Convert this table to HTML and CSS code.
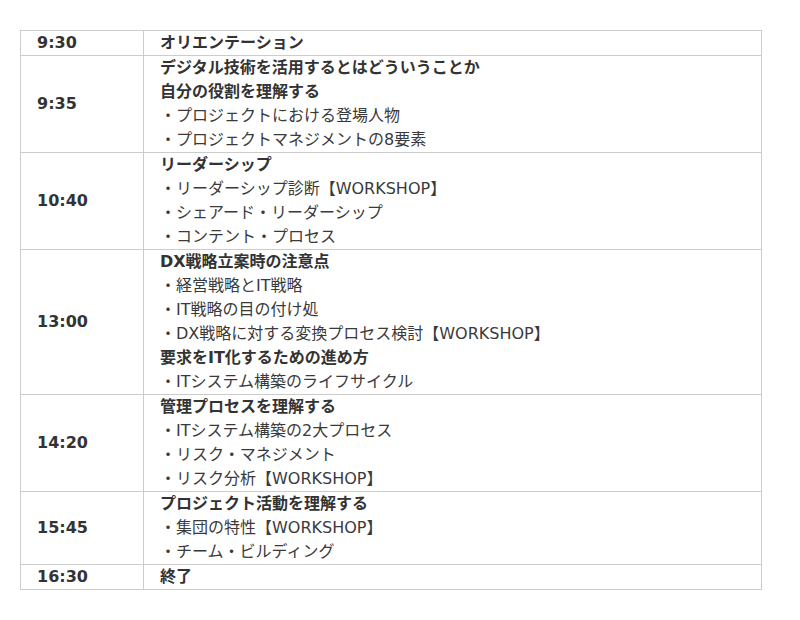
FILE: index.html
```html
<!DOCTYPE html>
<html lang="ja">
<head>
<meta charset="utf-8">
<link rel="stylesheet" href="styles.css">
</head>
<body>
<table class="schedule">
  <tr><td class="time">9:30</td><td class="content"><b>オリエンテーション</b></td></tr>
  <tr><td class="time">9:35</td><td class="content"><b>デジタル技術を活用するとはどういうことか</b><br><b>自分の役割を理解する</b><br>・プロジェクトにおける登場人物<br>・プロジェクトマネジメントの8要素</td></tr>
  <tr><td class="time">10:40</td><td class="content"><b>リーダーシップ</b><br>・リーダーシップ診断【WORKSHOP】<br>・シェアード・リーダーシップ<br>・コンテント・プロセス</td></tr>
  <tr><td class="time">13:00</td><td class="content"><b>DX戦略立案時の注意点</b><br>・経営戦略とIT戦略<br>・IT戦略の目の付け処<br>・DX戦略に対する変換プロセス検討【WORKSHOP】<br><b>要求をIT化するための進め方</b><br>・ITシステム構築のライフサイクル</td></tr>
  <tr><td class="time">14:20</td><td class="content"><b>管理プロセスを理解する</b><br>・ITシステム構築の2大プロセス<br>・リスク・マネジメント<br>・リスク分析【WORKSHOP】</td></tr>
  <tr><td class="time">15:45</td><td class="content"><b>プロジェクト活動を理解する</b><br>・集団の特性【WORKSHOP】<br>・チーム・ビルディング</td></tr>
  <tr><td class="time">16:30</td><td class="content"><b>終了</b></td></tr>
</table>
</body>
</html>
```
FILE: styles.css
```css
html, body {
  margin: 0;
  padding: 0;
  background: #fff;
}
body {
  padding: 30px 0 0 20px;
  font-family: "DejaVu Sans", "Noto Sans CJK JP", sans-serif;
  font-size: 16px;
  color: #333;
}
.schedule {
  border-collapse: collapse;
  width: 742px;
}
.schedule td {
  border: 1px solid #ccc;
  padding: 0 16px;
  line-height: 24px;
  vertical-align: middle;
}
.schedule .time {
  width: 90px;
  font-weight: bold;
}
.schedule .content {
  color: #3a3a3a;
}
.schedule .content b {
  font-weight: bold;
  color: #333;
}
```
